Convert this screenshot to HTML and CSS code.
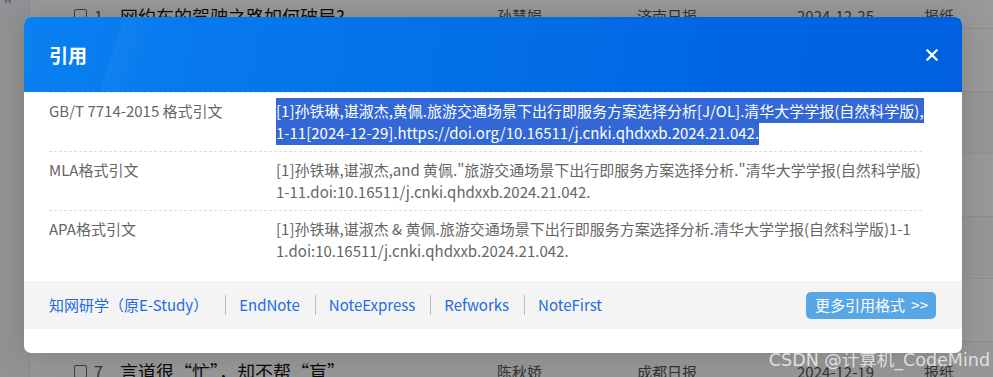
FILE: index.html
```html
<!DOCTYPE html>
<html lang="zh-CN">

<head>
    <meta charset="UTF-8">
    <meta name="viewport" content="width=device-width, initial-scale=1.0">
    <title>引用</title>

    <link rel="stylesheet" href="styles.css">

</head>

<body>
    <div class="page">
        <div class="side-bar">
            <span class="side-arrow">^</span>
        </div>

        <div class="result-list">
            <div class="result-row">
                <span class="check"></span>
                <span class="num">1</span>
                <span class="title">网约车的驾驶之路如何破局?</span>
                <span class="author">孙慧娟</span>
                <span class="source">济南日报</span>
                <span class="date">2024-12-25</span>
                <span class="type">报纸</span>
            </div>
            <div class="result-row"></div>
            <div class="result-row"></div>
            <div class="result-row"></div>
            <div class="result-row"></div>
            <div class="result-row"></div>
            <div class="result-row">
                <span class="check"></span>
                <span class="num">7</span>
                <span class="title">言道很“忙”，却不帮“盲”</span>
                <span class="author">陈秋娇</span>
                <span class="source">成都日报</span>
                <span class="date">2024-12-19</span>
                <span class="type">报纸</span>
            </div>
        </div>
    </div>

    <div class="mask"></div>

    <div class="quote-dialog">
        <div class="dialog-head">
            <h2 class="dialog-title">引用</h2>
            <span class="dialog-close">
                <svg width="12" height="12" viewBox="0 0 12 12">
                    <path d="M1.3 1.3 L10.7 10.7 M10.7 1.3 L1.3 10.7" stroke="#fff" stroke-width="2.3" stroke-linecap="round"/>
                </svg>
            </span>
        </div>

        <div class="quote-body">
            <div class="quote-row">
                <div class="quote-label">GB/T 7714-2015 格式引文</div>
                <div class="quote-text"><span class="selected">[1]孙铁琳,谌淑杰,黄佩.旅游交通场景下出行即服务方案选择分析[J/OL].清华大学学报(自然科学版),<br>1-11[2024-12-29].https://doi.org/10.16511/j.cnki.qhdxxb.2024.21.042.</span></div>
            </div>
            <div class="quote-row">
                <div class="quote-label">MLA格式引文</div>
                <div class="quote-text">[1]孙铁琳,谌淑杰,and 黄佩."旅游交通场景下出行即服务方案选择分析."清华大学学报(自然科学版)<br>1-11.doi:10.16511/j.cnki.qhdxxb.2024.21.042.</div>
            </div>
            <div class="quote-row">
                <div class="quote-label">APA格式引文</div>
                <div class="quote-text">[1]孙铁琳,谌淑杰 &amp; 黄佩.旅游交通场景下出行即服务方案选择分析.清华大学学报(自然科学版)1-1<br>1.doi:10.16511/j.cnki.qhdxxb.2024.21.042.</div>
            </div>
        </div>

        <div class="quote-foot">
            <div class="export-links">
                <a class="export-link">知网研学（原E-Study）</a>
                <a class="export-link">EndNote</a>
                <a class="export-link">NoteExpress</a>
                <a class="export-link">Refworks</a>
                <a class="export-link">NoteFirst</a>
            </div>
            <a class="more-btn">更多引用格式 &gt;&gt;</a>
        </div>
    </div>

    <div class="watermark">CSDN @计算机_CodeMind</div>
</body>

</html>
```

FILE: styles.css
```css
* {
    margin: 0;
    padding: 0;
    box-sizing: border-box;
}

body {
    width: 993px;
    height: 377px;
    overflow: hidden;
    position: relative;
    background-color: #fff;
    font-family: "Noto Sans CJK SC", "Noto Sans", sans-serif;
}

/* page under the dialog */

.page {
    display: flex;
    height: 100%;
}

.side-bar {
    width: 30px;
    background: linear-gradient(180deg, #f0f4fb 0, #f0f4fb 20px, #f4f4f4 21px);
    border-right: 1px solid #e8e8e8;
}

.side-arrow {
    display: block;
    padding-left: 4px;
    margin-top: -9px;
    color: #666;
    font-size: 14px;
}

.result-list {
    flex: 1;
    padding-top: 3px;
}

.result-row {
    display: flex;
    align-items: center;
    height: 62.5px;
    padding-left: 44px;
    border-bottom: 1px solid #ececec;
    color: #333;
}

.result-row:nth-child(odd) {
    background-color: #fafafa;
}

.result-row:first-child {
    height: 26px;
    background-color: #fff;
}

.result-row:last-child {
    height: 35.5px;
    padding-top: 24px;
    border-bottom: none;
}

.check {
    width: 13px;
    height: 13px;
    border: 1px solid #666;
    border-radius: 2px;
}

.num {
    width: 33px;
    padding-left: 7px;
    font-size: 16px;
    color: #555;
}

.title {
    width: 377px;
    font-size: 18px;
    color: #111;
}

.author {
    width: 140px;
    font-size: 15px;
    color: #555;
}

.source {
    width: 160px;
    font-size: 15px;
    color: #555;
}

.date {
    width: 127px;
    font-size: 15px;
    color: #555;
}

.type {
    font-size: 15px;
    color: #555;
}

.mask {
    position: absolute;
    inset: 0;
    background-color: rgba(0, 0, 0, 0.4);
}

/* dialog */

.quote-dialog {
    position: absolute;
    left: 24px;
    top: 17px;
    width: 938px;
    height: 336px;
    background-color: #fff;
    border-radius: 7px;
    overflow: hidden;
    box-shadow: 0 0 30px rgba(0, 0, 0, 0.15);
}

.dialog-head {
    display: flex;
    align-items: center;
    justify-content: space-between;
    height: 75px;
    padding: 0 25px;
    background:
        linear-gradient(108deg, transparent 0, transparent 95px, rgba(255,255,255,0.04) 96px, transparent 130px),
        linear-gradient(100deg, #0a80f1 0%, #0472e8 40%, #0066e2 75%, #0060df 100%);
}

.dialog-title {
    color: #fff;
    font-size: 19px;
    font-weight: 700;
}

.dialog-close {
    display: flex;
    margin-right: -1px;
}

.quote-body {
    padding: 0 40px 0 25px;
}

.quote-row {
    display: flex;
    padding: 7px 0;
    border-top: 1px dashed #dedede;
    line-height: 22px;
    font-size: 15px;
    color: #666;
}

.quote-row:first-child {
    border-top-color: #e6e6e6;
}

.quote-label {
    width: 227px;
    flex-shrink: 0;
}

.quote-text {
    white-space: nowrap;
}

.selected {
    background-color: #3367d6;
    color: #fff;
    padding: 2px 0;
}

.quote-foot {
    display: flex;
    align-items: center;
    justify-content: space-between;
    height: 48px;
    margin-top: 12px;
    padding: 0 26px 0 25px;
    background-color: #f4f4f4;
}

.export-links {
    display: flex;
    align-items: center;
}

.export-link {
    padding: 0 15px 0 13px;
    border-left: 1px solid #bcbcbc;
    line-height: 20px;
    color: #1f6be0;
    font-size: 15px;
}

.export-link:first-child {
    padding-left: 0;
    padding-right: 17px;
    border-left: none;
}

.more-btn {
    padding: 2px 8px 3px 9px;
    background-color: #57a6e6;
    border-radius: 5px;
    color: #fff;
    font-size: 15px;
    line-height: 22px;
    word-spacing: 3px;
}

.watermark {
    position: absolute;
    right: 3px;
    top: 346px;
    color: rgba(255, 255, 255, 0.72);
    font-family: "DejaVu Sans", "Noto Sans CJK SC", sans-serif;
    font-size: 17.5px;
}
```
